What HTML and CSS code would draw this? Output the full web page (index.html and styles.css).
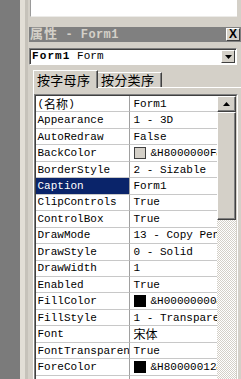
FILE: index.html
```html
<!DOCTYPE html>
<html lang="zh">
<head>
<meta charset="utf-8">
<link rel="stylesheet" href="styles.css">
</head>
<body>
<div class="screen">
  <div class="leftstrip"></div>
  <div class="panel">
    <div class="topbox"></div>
    <div class="titlebar">
      <span class="title"><span class="cjk">属性</span> - Form1</span>
      <span class="close">X</span>
    </div>
    <div class="combo">
      <span class="combo-text"><b>Form1</b> Form</span>
      <span class="dd"><svg width="7" height="4" viewBox="0 0 7 4"><path d="M0 0h7L3.5 4z" fill="#000"/></svg></span>
    </div>
    <div class="tabs">
      <div class="tab active">按字母序</div>
      <div class="tab">按分类序</div>
    </div>
    <div class="page">
      <div class="grid">
        <div class="grid-inner">
          <div class="rows">
            <div class="row"><div class="name">(<span class="cjk-sm">名称</span>)</div><div class="val">Form1</div></div>
            <div class="row"><div class="name">Appearance</div><div class="val">1 - 3D</div></div>
            <div class="row"><div class="name">AutoRedraw</div><div class="val">False</div></div>
            <div class="row"><div class="name">BackColor</div><div class="val"><span class="swatch sw-face"></span>&amp;H8000000F&amp;</div></div>
            <div class="row"><div class="name">BorderStyle</div><div class="val">2 - Sizable</div></div>
            <div class="row"><div class="name selected">Caption</div><div class="val">Form1</div></div>
            <div class="row"><div class="name">ClipControls</div><div class="val">True</div></div>
            <div class="row"><div class="name">ControlBox</div><div class="val">True</div></div>
            <div class="row"><div class="name">DrawMode</div><div class="val">13 - Copy Pen</div></div>
            <div class="row"><div class="name">DrawStyle</div><div class="val">0 - Solid</div></div>
            <div class="row"><div class="name">DrawWidth</div><div class="val">1</div></div>
            <div class="row"><div class="name">Enabled</div><div class="val">True</div></div>
            <div class="row"><div class="name">FillColor</div><div class="val"><span class="swatch sw-black"></span>&amp;H00000000&amp;</div></div>
            <div class="row"><div class="name">FillStyle</div><div class="val">1 - Transparent</div></div>
            <div class="row"><div class="name">Font</div><div class="val"><span class="cjk-sm">宋体</span></div></div>
            <div class="row"><div class="name">FontTransparent</div><div class="val">True</div></div>
            <div class="row"><div class="name">ForeColor</div><div class="val"><span class="swatch sw-black"></span>&amp;H80000012&amp;</div></div>
            <div class="row"><div class="name">HasDC</div><div class="val">True</div></div>
          </div>
          <div class="scrollbar">
            <div class="sb-btn"><svg width="7" height="4" viewBox="0 0 7 4"><path d="M3.5 0L7 4H0z" fill="#000"/></svg></div>
            <div class="sb-thumb"></div>
            <div class="sb-track"></div>
          </div>
        </div>
      </div>
    </div>
  </div>
</div>
</body>
</html>
```
FILE: styles.css
```css
* { box-sizing: border-box; }
html, body { margin: 0; padding: 0; }
body {
  background: #d4d0c8;
  font-family: "Liberation Mono", "Noto Sans CJK SC", monospace;
  font-size: 11px;
  color: #000;
}
.screen {
  width: 241px;
  height: 379px;
  display: flex;
  overflow: hidden;
}
.leftstrip {
  width: 20px;
  flex: none;
  background: #7b7b7b;
}
.panel {
  flex: 1;
  display: flex;
  flex-direction: column;
  padding-left: 9px;
  background: linear-gradient(to right, #e2ded6 0 5px, #c6c2ba 5px 8px, #d4d0c8 8px);
}
.cjk {
  font-family: "Noto Sans CJK SC", sans-serif;
  font-size: 13px;
  line-height: 1;
}
.cjk-sm {
  font-family: "Noto Sans CJK SC", sans-serif;
  font-size: 12px;
  line-height: 1;
}
.topbox {
  margin-left: 1px;
  width: 207px;
  height: 17px;
  flex: none;
  background: #fff;
  border-left: 1px solid #9a9a9a;
  border-bottom: 1px solid #ecebe8;
}
.titlebar {
  margin-top: 10px;
  height: 15px;
  flex: none;
  background: #808080;
  display: flex;
  align-items: center;
  justify-content: space-between;
  padding: 0 1px 0 1px;
}
.title {
  color: #d4d0c8;
  font-weight: bold;
  font-size: 12px;
  letter-spacing: 0.4px;
  line-height: 15px;
  white-space: nowrap;
}
.title .cjk { font-size: 13px; letter-spacing: 1px; }
.close {
  width: 14px;
  height: 13px;
  background: #d4d0c8;
  border-top: 1px solid #fff;
  border-left: 1px solid #fff;
  border-right: 1px solid #404040;
  border-bottom: 1px solid #404040;
  font-family: "Liberation Sans", sans-serif;
  font-weight: bold;
  font-size: 12px;
  line-height: 11px;
  text-align: center;
  color: #000;
}
.combo {
  margin-top: 6px;
  width: 208px;
  height: 17px;
  flex: none;
  background: #fff;
  border-top: 1px solid #808080;
  border-left: 1px solid #808080;
  border-right: 1px solid #fff;
  border-bottom: 1px solid #fff;
  box-shadow: inset 1px 1px #404040;
  display: flex;
  align-items: center;
  justify-content: space-between;
  padding: 0 1px 0 2px;
}
.combo-text { line-height: 15px; white-space: nowrap; }
.combo-text b { letter-spacing: 1.1px; }
.dd {
  width: 14px;
  height: 13px;
  background: #d4d0c8;
  border-top: 1px solid #fff;
  border-left: 1px solid #fff;
  border-right: 1px solid #404040;
  border-bottom: 1px solid #404040;
  display: flex;
  align-items: center;
  justify-content: center;
}
.tabs {
  margin-top: 5px;
  height: 17px;
  flex: none;
  display: flex;
  align-items: flex-end;
  padding-left: 4px;
}
.tab {
  font-family: "Noto Sans CJK SC", sans-serif;
  font-size: 13px;
  letter-spacing: 0.3px;
  background: #d4d0c8;
  border-top: 1px solid #fff;
  border-right: 1px solid #404040;
  box-shadow: inset -1px 0 #808080;
  height: 15px;
  width: 64px;
  line-height: 14px;
  padding-left: 3px;
  white-space: nowrap;
}
.tab.active {
  width: 65px;
  height: 18px;
  margin-bottom: -1px;
  border-left: 1px solid #fff;
  line-height: 17px;
  padding-left: 3px;
  position: relative;
  z-index: 1;
}
.page {
  flex: 1;
  margin-left: 4px;
  border-top: 1px solid #fff;
  border-left: 1px solid #fff;
  padding-top: 6px;
  min-height: 0;
}
.grid {
  width: 204px;
  height: 400px;
  border-top: 1px solid #808080;
  border-left: 1px solid #808080;
  border-right: 1px solid #fff;
  background: #fff;
}
.grid-inner {
  height: 100%;
  border-top: 1px solid #404040;
  border-left: 1px solid #404040;
  border-right: 1px solid #d4d0c8;
  display: flex;
}
.rows {
  width: 181px;
  flex: none;
  display: flex;
  flex-direction: column;
}
.row {
  height: 16.46px;
  flex: none;
  display: grid;
  grid-template-columns: 94px 87px;
  line-height: 14px;
}
.name, .val {
  border-bottom: 1px solid #c8c8c8;
  white-space: nowrap;
  overflow: hidden;
  display: flex;
  align-items: center;
}
.name {
  border-right: 1px solid #a0a0a0;
  padding-left: 1.5px;
}
.name.selected {
  background: #0a246a;
  color: #fff;
}
.val {
  padding-left: 3.5px;
}
.swatch {
  width: 12px;
  height: 12px;
  flex: none;
  border: 1px solid #000;
  margin-right: 5px;
}
.sw-face { background: #d4d0c8; border-color: #404040; }
.sw-black { background: #000; }
.scrollbar {
  width: 19px;
  flex: none;
  display: flex;
  flex-direction: column;
}
.sb-btn, .sb-thumb {
  background: #d4d0c8;
  border-top: 1px solid #fff;
  border-left: 1px solid #fff;
  border-right: 1px solid #404040;
  border-bottom: 1px solid #404040;
  box-shadow: inset -1px -1px #808080;
}
.sb-btn {
  height: 16px;
  display: flex;
  align-items: center;
  justify-content: center;
}
.sb-thumb { height: 108px; }
.sb-track {
  flex: 1;
  background: repeating-conic-gradient(#d4d0c8 0 25%, #fff 0 50%) 0 0 / 2px 2px;
}
```
